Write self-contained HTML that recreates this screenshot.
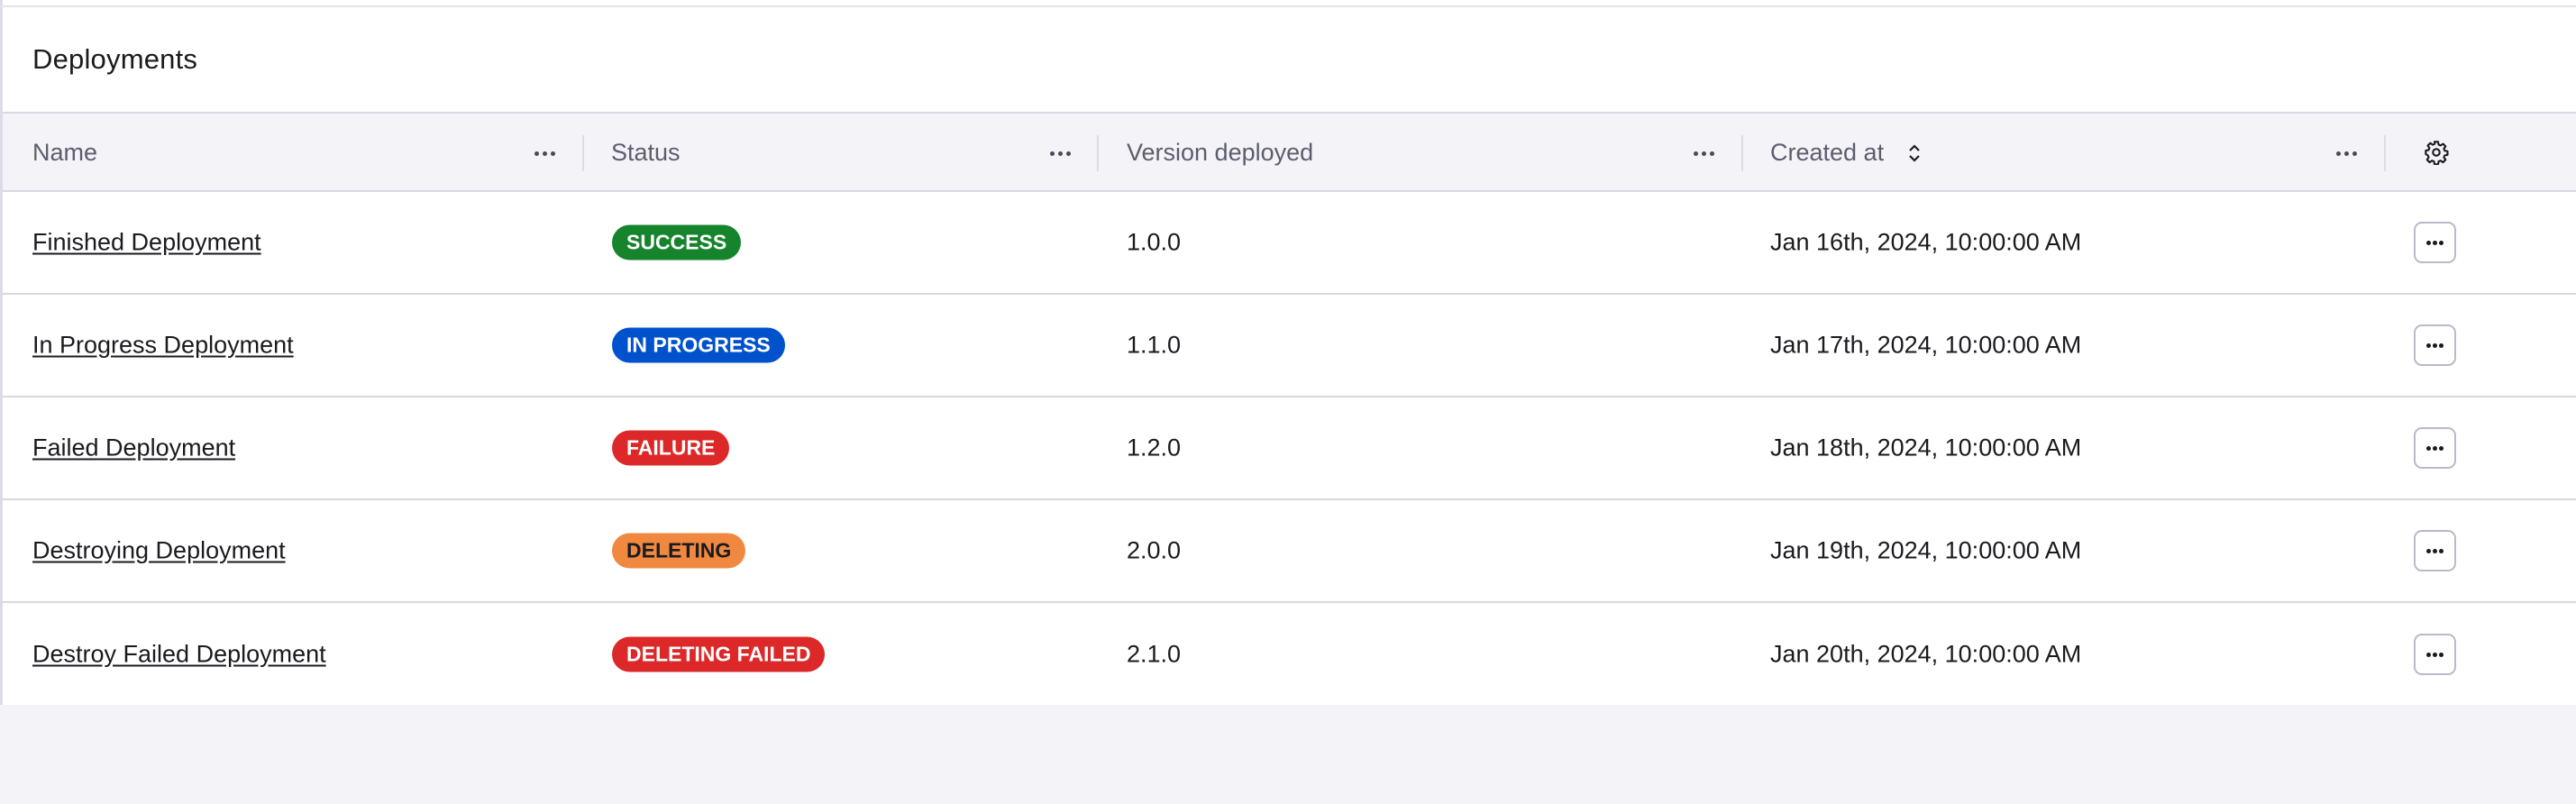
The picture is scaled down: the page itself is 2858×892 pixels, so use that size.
<!DOCTYPE html>
<html><head><style>
*{box-sizing:border-box;margin:0;padding:0}
body{width:2858px;height:892px;background:#f3f3f8;font-family:"Liberation Sans",sans-serif;color:#1a1a1f;position:relative;overflow:hidden}
.card{position:absolute;left:0;top:0;width:2858px;height:782px;background:#fff;border-left:3px solid #dcdce6}
.topline{position:absolute;left:0;top:6px;width:2858px;height:2px;background:#e3e3ec}
.title{position:absolute;left:36px;top:48px;font-size:31px;font-weight:500;letter-spacing:0.2px}
.head{position:absolute;left:3px;top:124px;width:2855px;height:89px;background:#f3f3f8;border-top:2px solid #d8d8e4;border-bottom:2px solid #d8d8e4}
.h{position:absolute;top:28px;font-size:27px;color:#5d5d6e}
.dots{position:absolute;top:42px;width:26px;height:6px}
.dots i{position:absolute;top:0;width:5px;height:5px;border-radius:50%;background:#4a4a58}
.div{position:absolute;top:24px;width:2px;height:40px;background:#dcdce6}
.row{position:absolute;left:3px;width:2855px;border-bottom:2px solid #d8d8e4;background:#fff}
.c{position:absolute;font-size:27px;top:50%;transform:translateY(-50%)}
.name{left:33px;text-decoration:underline;text-underline-offset:3px}
.badge{position:absolute;left:676px;top:50%;transform:translateY(-50%);height:39px;line-height:39px;border-radius:20px;padding:0 16px;font-size:23px;font-weight:700;color:#fff}
.btn{position:absolute;left:2675px;top:50%;transform:translateY(-50%);width:47px;height:46px;border:2px solid #b9b9c8;border-radius:9px}
.btn i{position:absolute;top:19px;width:5px;height:5px;border-radius:50%;background:#1a1a1f}
</style></head><body>
<div class="card"></div>
<div class="topline"></div>
<div class="title">Deployments</div>
<div class="head">
 <div class="h" style="left:33px">Name</div>
 <div class="dots" style="left:590px"><i style="left:0"></i><i style="left:9px"></i><i style="left:18px"></i></div>
 <div class="div" style="left:643px"></div>
 <div class="h" style="left:675px">Status</div>
 <div class="dots" style="left:1162px"><i style="left:0"></i><i style="left:9px"></i><i style="left:18px"></i></div>
 <div class="div" style="left:1214px"></div>
 <div class="h" style="left:1247px">Version deployed</div>
 <div class="dots" style="left:1876px"><i style="left:0"></i><i style="left:9px"></i><i style="left:18px"></i></div>
 <div class="div" style="left:1929px"></div>
 <div class="h" style="left:1961px">Created at</div>
 <svg style="position:absolute;left:2113px;top:32px" width="16" height="24" viewBox="0 0 16 24"><path d="M3 9 L8 4 L13 9 M3 15 L8 20 L13 15" fill="none" stroke="#1a1a1f" stroke-width="2.2"/></svg>
 <div class="dots" style="left:2589px"><i style="left:0"></i><i style="left:9px"></i><i style="left:18px"></i></div>
 <div class="div" style="left:2642px"></div>
 <svg style="position:absolute;left:2686px;top:29px" width="28" height="28" viewBox="0 0 24 24"><path d="M10.3 2h3.4l.5 2.7 1.9.8 2.3-1.6 2.4 2.4-1.6 2.3.8 1.9 2.7.5v3.4l-2.7.5-.8 1.9 1.6 2.3-2.4 2.4-2.3-1.6-1.9.8-.5 2.7h-3.4l-.5-2.7-1.9-.8-2.3 1.6-2.4-2.4 1.6-2.3-.8-1.9L2 13.7v-3.4l2.7-.5.8-1.9-1.6-2.3 2.4-2.4 2.3 1.6 1.9-.8z" fill="none" stroke="#1a1a1f" stroke-width="1.8" stroke-linejoin="round"/><circle cx="12" cy="12" r="3.2" fill="none" stroke="#1a1a1f" stroke-width="1.8"/></svg>
</div>

<div class="row" style="top:213px;height:114px"><div class="c name">Finished Deployment</div><div class="badge" style="background:#15842c">SUCCESS</div><div class="c" style="left:1247px">1.0.0</div><div class="c" style="left:1961px">Jan 16th, 2024, 10:00:00 AM</div><div class="btn"><i style="left:12px"></i><i style="left:19px"></i><i style="left:26px"></i></div></div>
<div class="row" style="top:327px;height:114px"><div class="c name">In Progress Deployment</div><div class="badge" style="background:#0052cc">IN PROGRESS</div><div class="c" style="left:1247px">1.1.0</div><div class="c" style="left:1961px">Jan 17th, 2024, 10:00:00 AM</div><div class="btn"><i style="left:12px"></i><i style="left:19px"></i><i style="left:26px"></i></div></div>
<div class="row" style="top:441px;height:114px"><div class="c name">Failed Deployment</div><div class="badge" style="background:#dc2828">FAILURE</div><div class="c" style="left:1247px">1.2.0</div><div class="c" style="left:1961px">Jan 18th, 2024, 10:00:00 AM</div><div class="btn"><i style="left:12px"></i><i style="left:19px"></i><i style="left:26px"></i></div></div>
<div class="row" style="top:555px;height:114px"><div class="c name">Destroying Deployment</div><div class="badge" style="background:#f0893f;color:#1a1a1f">DELETING</div><div class="c" style="left:1247px">2.0.0</div><div class="c" style="left:1961px">Jan 19th, 2024, 10:00:00 AM</div><div class="btn"><i style="left:12px"></i><i style="left:19px"></i><i style="left:26px"></i></div></div>
<div class="row" style="top:669px;height:113px;border-bottom:none"><div class="c name">Destroy Failed Deployment</div><div class="badge" style="background:#dc2828">DELETING FAILED</div><div class="c" style="left:1247px">2.1.0</div><div class="c" style="left:1961px">Jan 20th, 2024, 10:00:00 AM</div><div class="btn"><i style="left:12px"></i><i style="left:19px"></i><i style="left:26px"></i></div></div>
</body></html>
